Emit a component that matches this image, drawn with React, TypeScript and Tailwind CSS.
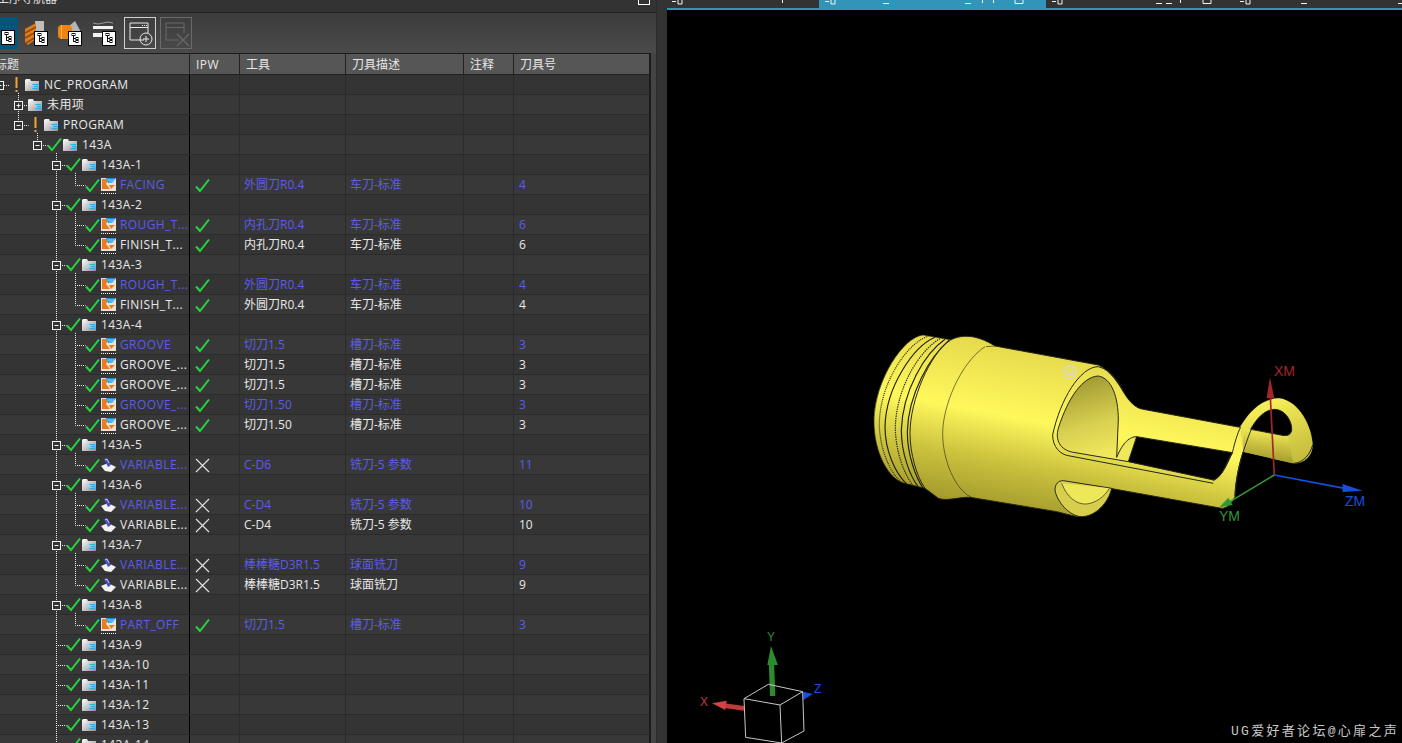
import React from 'react';

interface Row {
    level: number;
    name: string;
    status?: 'ok' | 'warn';
    box?: 'minus' | 'plus';
    icon?: 'turn' | 'mill';
    blue?: boolean;
    ipw?: 'ok' | 'x';
    tool?: string;
    desc?: string;
    no?: string;
}

const op = (name: string, icon: 'turn' | 'mill', blue: boolean, tool: string, desc: string, no: string): Row => ({
    level: 4, name, status: 'ok', icon, blue, ipw: icon === 'turn' ? 'ok' : 'x', tool, desc, no,
});
const group = (name: string): Row => ({ level: 3, name, status: 'ok', box: 'minus' });
const empty = (name: string): Row => ({ level: 3, name, status: 'ok' });

const rows: Row[] = [
    { level: 0, name: 'NC_PROGRAM', status: 'warn', box: 'minus' },
    { level: 1, name: '未用项', box: 'plus' },
    { level: 1, name: 'PROGRAM', status: 'warn', box: 'minus' },
    { level: 2, name: '143A', status: 'ok', box: 'minus' },
    group('143A-1'),
    op('FACING', 'turn', true, '外圆刀R0.4', '车刀-标准', '4'),
    group('143A-2'),
    op('ROUGH_T...', 'turn', true, '内孔刀R0.4', '车刀-标准', '6'),
    op('FINISH_T...', 'turn', false, '内孔刀R0.4', '车刀-标准', '6'),
    group('143A-3'),
    op('ROUGH_T...', 'turn', true, '外圆刀R0.4', '车刀-标准', '4'),
    op('FINISH_T...', 'turn', false, '外圆刀R0.4', '车刀-标准', '4'),
    group('143A-4'),
    op('GROOVE', 'turn', true, '切刀1.5', '槽刀-标准', '3'),
    op('GROOVE_...', 'turn', false, '切刀1.5', '槽刀-标准', '3'),
    op('GROOVE_...', 'turn', false, '切刀1.5', '槽刀-标准', '3'),
    op('GROOVE_...', 'turn', true, '切刀1.50', '槽刀-标准', '3'),
    op('GROOVE_...', 'turn', false, '切刀1.50', '槽刀-标准', '3'),
    group('143A-5'),
    op('VARIABLE...', 'mill', true, 'C-D6', '铣刀-5 参数', '11'),
    group('143A-6'),
    op('VARIABLE...', 'mill', true, 'C-D4', '铣刀-5 参数', '10'),
    op('VARIABLE...', 'mill', false, 'C-D4', '铣刀-5 参数', '10'),
    group('143A-7'),
    op('VARIABLE...', 'mill', true, '棒棒糖D3R1.5', '球面铣刀', '9'),
    op('VARIABLE...', 'mill', false, '棒棒糖D3R1.5', '球面铣刀', '9'),
    group('143A-8'),
    op('PART_OFF', 'turn', true, '切刀1.5', '槽刀-标准', '3'),
    empty('143A-9'),
    empty('143A-10'),
    empty('143A-11'),
    empty('143A-12'),
    empty('143A-13'),
    empty('143A-14'),
];

const center = (level: number) => 19 * level - 0.5;

const Check = () => (
    <svg width="15" height="15" viewBox="0 0 15 15" fill="none">
        <path d="M1 8.5 L5 13 L14 1.5" stroke="#27d63f" strokeWidth="2" />
    </svg>
);

const Cross = () => (
    <svg width="15" height="15" viewBox="0 0 15 15" fill="none">
        <path d="M1 1 L14 14 M14 1 L1 14" stroke="#e6e6e6" strokeWidth="1.1" />
    </svg>
);

const Bang = () => (
    <svg width="16" height="16" viewBox="0 0 16 16">
        <rect x="6.5" y="0" width="2" height="11" fill="#f5a32e" />
        <rect x="6.5" y="13" width="2" height="2" fill="#f5a32e" />
    </svg>
);

const Folder = () => (
    <svg width="15" height="14" viewBox="0 0 15 14">
        <defs>
            <linearGradient id="fld" x1="0" y1="0" x2="1" y2="1">
                <stop offset="0" stopColor="#ffffff" />
                <stop offset="1" stopColor="#8f8f8f" />
            </linearGradient>
        </defs>
        <path d="M0 2 L1 1 L5 1 L6 3 L14 3 L14 13 L0 13 Z" fill="url(#fld)" />
        <path d="M7.5 6.5 H13 M9 8.5 H13 M7.5 10.5 H13" stroke="#1fb4e6" strokeWidth="1" fill="none" />
    </svg>
);

const TurnIcon = () => (
    <svg width="16" height="17" viewBox="0 0 16 17">
        <rect x="0" y="1" width="15" height="13" fill="#ebe3d6" />
        <path d="M1 2 H8 L5 7 L9 12 H1 Z" fill="#ee7a1e" />
        <path d="M5 1 H15 L11 6 H7 Z" fill="#1f8fdc" />
        <path d="M8 8 H14 L10 12 Z" fill="#ee7a1e" />
        <path d="M6 3 H13 M8 5 H12" stroke="#7fe0ff" strokeWidth="1" />
        <path d="M0 16.5 H16" stroke="#ffffff" strokeDasharray="1 1" />
    </svg>
);

const MillIcon = () => (
    <svg width="16" height="15" viewBox="0 0 16 15">
        <path d="M0 8 L7 5 L15 9 L10 14 L4 13 Z" fill="#f2f2f2" />
        <path d="M3 1 L6 0 L10 7 L7 9 Z" fill="#4a4fc0" />
        <path d="M4 2 L6 1 L8 5" stroke="#c8ccff" fill="none" />
    </svg>
);

// expand lines and boxes lie over the rows of the first column
const TreeLines = () => (
    <svg className="absolute left-0 top-0 pointer-events-none" width="189" height={rows.length * 20} fill="none">
        {rows.map((r, i) => {
            if (r.level === 0) return null;
            let p = i - 1;
            while (rows[p].level >= r.level) p--;
            const x = Math.floor(center(r.level)) + 0.5;
            const y = i * 20 + 10.5;
            return (
                <path
                    key={i}
                    d={`M${x} ${p * 20 + 18} V${y} H${x + 10}`}
                    stroke="#f0f0f0"
                    strokeDasharray="1 1"
                />
            );
        })}
        <path d="M0 10.5 H10" stroke="#f0f0f0" strokeDasharray="1 1" />
        {rows.map((r, i) => {
            if (!r.box) return null;
            const x = Math.floor(center(r.level)) + 0.5;
            const y = i * 20 + 10.5;
            return (
                <g key={i} stroke="#f4f4f4">
                    <rect x={x - 4} y={y - 4} width="8" height="8" fill="#333333" />
                    <path d={r.box === 'plus' ? `M${x - 2} ${y} H${x + 2} M${x} ${y - 2} V${y + 2}` : `M${x - 2} ${y} H${x + 2}`} />
                </g>
            );
        })}
    </svg>
);

const Badge = () => (
    <span className="relative flex w-[14px] h-[15px] items-center justify-center bg-white border border-black">
        <svg width="10" height="11" viewBox="0 0 10 11" fill="none" stroke="#111">
            <rect x="2" y="0.5" width="3" height="2" />
            <path d="M3.5 3 V9 M3.5 5.5 H6 M3.5 8.5 H6" />
            <rect x="6" y="4.5" width="2" height="2" />
            <rect x="6" y="7.5" width="2" height="2" />
        </svg>
    </span>
);

const Toolbar = () => (
    <div className="h-[41px] flex-none flex items-center bg-gradient-to-b from-[#3c3c3c] to-[#4a4a4a] border-t border-[#222]">
        <div className="w-[18px] h-8 bg-[#075578] flex items-end justify-end pr-[3px] pb-1">
            <Badge />
        </div>
        <div className="w-[34px] h-8 relative flex items-end justify-end pr-1 pb-[3px]">
            <svg className="absolute left-[6px] top-[3px]" width="24" height="26" viewBox="0 0 24 26">
                <rect x="11" y="1" width="9" height="11" fill="#bdbdbd" />
                <path d="M1 9 L12 3 V19 L4 25 L1 22 Z" fill="#e07a1c" />
                <path d="M1 13 L12 7 M1 18 L12 12 M2 23 L12 17" stroke="#8d4a10" strokeWidth="1.5" />
            </svg>
            <Badge />
        </div>
        <div className="w-[34px] h-8 relative flex items-end justify-end pr-1 pb-[3px]">
            <svg className="absolute left-[6px] top-[3px]" width="24" height="26" viewBox="0 0 24 26">
                <path d="M11 6 L17 1 L24 14 L18 20 Z" fill="#b5b5b5" />
                <rect x="0" y="5" width="14" height="14" rx="4" fill="#ee8413" />
                <path d="M3.5 5 V19" stroke="#ffb14a" />
            </svg>
            <Badge />
        </div>
        <div className="w-[34px] h-8 relative flex items-end justify-end pr-1 pb-[3px]">
            <svg className="absolute left-[7px] top-[3px]" width="22" height="20" viewBox="0 0 22 20">
                <path d="M0 6 H20 V9 H0 Z M0 13 H10 V17 H0 Z" fill="#f2f2f2" />
                <path d="M0 3 Q5 5 10 3 T20 3" stroke="#999" fill="none" />
            </svg>
            <Badge />
        </div>
        <button className="w-8 h-8 ml-1 border border-[#cfcfcf] flex items-center justify-center">
            <svg width="28" height="28" viewBox="0 0 28 28" fill="none" stroke="#e8e8e8">
                <path d="M18 21 H4 V4 H22 V14" />
                <path d="M4 8.5 H22" />
                <path d="M16 6.5 H17 M18 6.5 H19 M20 6.5 H21" />
                <circle cx="20" cy="20" r="6" />
                <path d="M17 20 H23 M20 17 V23" />
            </svg>
        </button>
        <button className="w-8 h-8 ml-1 border border-[#6a6a6a] flex items-center justify-center">
            <svg width="28" height="28" viewBox="0 0 28 28" fill="none" stroke="#686868">
                <path d="M17 21 H4 V4 H22 V14" />
                <path d="M4 8.5 H22" />
                <path d="M15 15 L27 27 M27 15 L15 27" strokeWidth="1.3" />
            </svg>
        </button>
    </div>
);

const head = ['IPW', '工具', '刀具描述', '注释', '刀具号'];
const cols = 'grid grid-cols-[190px_50px_106px_118px_50px_1fr]';

const Table = () => (
    <div className="flex-1 min-h-0 mr-[5px] border-t border-r-2 border-[#1c1c1c] bg-[#333] overflow-hidden">
        <div className={`${cols} h-[21px] border-b border-[#222] bg-[#565656] text-[#e6e6e6]`}>
            <div className="border-r border-[#222] leading-[22px] -ml-[5px]">标题</div>
            {head.map((h, i) => (
                <div key={h} className={`pl-[6px] leading-[22px] ${i === 0 ? 'tracking-[0.5px]' : ''} ${i < 4 ? 'border-r border-[#222]' : ''}`}>{h}</div>
            ))}
        </div>
        <div className="relative">
            {rows.map((r, i) => (
                <div key={i} className={`${cols} h-5 border-b border-[#2b2b2b] ${i % 2 ? 'bg-[#383838]' : 'bg-[#343434]'}`}>
                    <div className="flex items-center border-r border-black overflow-hidden">
                        <div className="flex items-center flex-none" style={{ marginLeft: center(r.level) + 9.5 }}>
                            {r.status === 'ok' && <span className="w-4 flex-none"><Check /></span>}
                            {r.status === 'warn' && <span className="w-4 flex-none"><Bang /></span>}
                            <span className="w-[19px] flex-none flex items-center">
                                {r.icon === 'turn' ? <TurnIcon /> : r.icon === 'mill' ? <MillIcon /> : <Folder />}
                            </span>
                            <span className={`whitespace-nowrap tracking-[0.4px] ${r.blue ? 'text-[#5c5ce8]' : 'text-[#e8e8e8]'}`}>{r.name}</span>
                        </div>
                    </div>
                    <div className="border-r border-[#2b2b2b] flex items-center pl-[5px]">
                        {r.ipw === 'ok' && <Check />}
                        {r.ipw === 'x' && <Cross />}
                    </div>
                    <div className={`border-r border-[#2b2b2b] pl-[4px] leading-5 whitespace-nowrap ${r.blue ? 'text-[#5c5ce8]' : 'text-[#e8e8e8]'}`}>{r.tool}</div>
                    <div className={`border-r border-[#2b2b2b] pl-[4px] leading-5 whitespace-nowrap ${r.blue ? 'text-[#5c5ce8]' : 'text-[#e8e8e8]'}`}>{r.desc}</div>
                    <div className="border-r border-[#2b2b2b]" />
                    <div className={`pl-[5px] leading-5 ${r.blue ? 'text-[#5c5ce8]' : 'text-[#e8e8e8]'}`}>{r.no}</div>
                </div>
            ))}
            <TreeLines />
        </div>
    </div>
);

const Tabs = () => (
    <div className="h-[10px] flex-none relative overflow-hidden">
        <div className="h-2 flex">
            <div className="w-[152px] bg-[#333]" />
            <div className="w-[227px] bg-[#3194b8]" />
            <div className="flex-1 bg-[#333]" />
        </div>
        <div className="h-[2px] bg-[#3194b8]" />
        <svg className="absolute left-0 top-0" width="735" height="8" fill="none" stroke="#f4f4f4">
            <path d="M5 1.5 H9 M11 0 V4 H15 V0 M115.5 0 V3" />
            <path d="M158 1.5 H162 M164 0 V4 H168 V0 M216 3.5 H222 M298 3.5 H304 M315.5 0 V3 M326.5 0 V3 M348 0 V3.5 H356 V0" />
            <path d="M385 1.5 H389 M391 0 V4 H395 V0 M489 3.5 H495 M499 3.5 H505 M513.5 0 V3 M536 0 V3.5 H544 V0" />
            <path d="M573 1.5 H577 M579 0 V4 H583 V0 M634 3.5 H640 M731 3.5 H735" />
        </svg>
    </div>
);

const Part = () => (
    <g transform="translate(860 320) scale(0.3333)">
        <defs>
            <linearGradient id="body" gradientUnits="userSpaceOnUse" x1="420" y1="70" x2="330" y2="560">
                <stop offset="0" stopColor="#e6da4c" />
                <stop offset="0.42" stopColor="#fff85c" />
                <stop offset="0.7" stopColor="#cbc23e" />
                <stop offset="1" stopColor="#a0982c" />
            </linearGradient>
            <linearGradient id="bore" gradientUnits="userSpaceOnUse" x1="650" y1="170" x2="720" y2="410">
                <stop offset="0" stopColor="#9d9630" />
                <stop offset="0.6" stopColor="#d8d050" />
                <stop offset="1" stopColor="#f0e85c" />
            </linearGradient>
            <linearGradient id="arm" gradientUnits="userSpaceOnUse" x1="1200" y1="330" x2="1190" y2="420">
                <stop offset="0" stopColor="#f0e856" />
                <stop offset="0.5" stopColor="#c8bf40" />
                <stop offset="1" stopColor="#a39b2e" />
            </linearGradient>
            <linearGradient id="ring" gradientUnits="userSpaceOnUse" x1="1250" y1="235" x2="1330" y2="430">
                <stop offset="0" stopColor="#f6ee58" />
                <stop offset="1" stopColor="#c0b83a" />
            </linearGradient>
        </defs>
        {/* threaded end */}
        <path d="M190 45 C130 50 45 180 42 300 C40 400 90 482 135 490 L195 505 L275 60 Z" fill="url(#body)" stroke="#26261a" strokeWidth="2" />
        <g fill="none" stroke="#23230f" strokeWidth="3.5">
            <path d="M205 48 C140 70 60 190 58 310 C58 390 95 470 130 490" strokeDasharray="3 3" />
            <path d="M225 52 C160 80 78 200 75 320 C75 390 105 460 140 492" />
            <path d="M240 56 C180 90 110 200 106 320 C106 390 130 460 160 498" strokeDasharray="4 3" />
            <path d="M255 58 C195 100 128 210 124 330 C124 400 150 470 176 502" />
            <path d="M268 60 C210 110 145 220 142 335 C142 400 165 470 190 505" />
        </g>
        {/* main body with arms and ring */}
        <path
            d="M272 60 C300 45 345 40 405 78 L715 135 C750 150 775 190 790 215 C810 250 830 265 850 268 L1140 322 C1170 270 1210 235 1258 235 C1320 245 1355 320 1358 375 C1358 405 1335 432 1300 430 L1150 395 C1135 440 1125 500 1125 530 C1115 552 1100 565 1085 565 L750 505 C740 550 690 590 650 590 L590 575 L330 532 C300 530 260 545 235 535 L195 505 C170 470 150 400 150 340 C150 240 210 100 272 60 Z"
            fill="url(#body)"
            stroke="#26261a"
            strokeWidth="3"
            strokeLinejoin="round"
        />
        {/* ring rear and upper arm seen through it */}
        <path d="M1140 322 C1170 270 1210 235 1258 235 C1320 245 1355 320 1358 375 C1358 405 1335 432 1300 430 L1150 395 Z" fill="url(#ring)" />
        <path d="M1150 325 L1285 348 L1300 430 L1150 395 Z" fill="url(#arm)" />
        {/* openings */}
        <path d="M830 350 L1118 398 C1105 420 1090 470 1060 480 L805 425 C790 400 805 360 830 350 Z" fill="#000" stroke="#26261a" strokeWidth="3" />
        <path d="M1172 328 C1190 295 1215 268 1245 268 C1280 270 1298 310 1295 332 C1292 345 1280 350 1262 345 Z" fill="#000" stroke="#26261a" strokeWidth="3" />
        <path d="M1125 528 C1128 470 1140 420 1155 380 C1162 360 1168 340 1176 325" fill="none" stroke="#26261a" strokeWidth="3" />
        <path d="M1060 482 C1090 470 1100 420 1118 395 C1124 370 1132 340 1142 322" fill="none" stroke="#26261a" strokeWidth="3" />
        <path d="M1300 430 C1330 430 1352 400 1358 375" fill="none" stroke="#26261a" strokeWidth="3" />
        {/* front bore */}
        <path d="M578 345 C600 240 660 140 715 140 C755 150 780 190 790 215" fill="none" stroke="#26261a" strokeWidth="3" />
        <path d="M595 325 C625 230 670 170 715 168 C755 175 775 230 775 300 L770 412 C790 365 810 350 830 350 L805 425 L640 397 C600 390 585 360 595 325 Z" fill="url(#bore)" stroke="#26261a" strokeWidth="3" />
        <path d="M578 345 C578 380 600 405 630 408 L1060 490" fill="none" stroke="#26261a" strokeWidth="3" />
        {/* lower notch */}
        <path d="M585 510 C590 545 630 590 665 590 C705 590 745 550 755 505 L610 482 C595 482 585 492 585 510 Z" fill="#d6ce4c" stroke="#26261a" strokeWidth="3" />
        <path d="M605 490 C620 530 650 555 680 552 C705 550 735 530 748 505" fill="#efe75a" stroke="#26261a" strokeWidth="2" />
        {/* body seams */}
        <g fill="none" stroke="#33331c" strokeWidth="2">
            <path d="M375 80 C300 130 248 260 248 340 C248 420 285 510 335 532" />
            <path d="M405 78 L378 80" />
        </g>
        {/* datum mark */}
        <g fill="none" stroke="#d8d8d8" strokeWidth="3.5">
            <circle cx="630" cy="156" r="19" />
            <circle cx="630" cy="156" r="9" />
        </g>
        {/* machine csys */}
        <path d="M1243 465 L1230 210" stroke="#a3262a" strokeWidth="5" />
        <path d="M1230 172 L1243 235 L1220 235 Z" fill="#a3262a" />
        <path d="M1243 465 L1470 508" stroke="#1450e0" strokeWidth="5" />
        <path d="M1508 512 L1448 492 L1448 516 Z" fill="#1450e0" />
        <path d="M1243 465 L1110 545" stroke="#2f9a35" strokeWidth="5" />
        <path d="M1078 562 L1105 533 L1118 555 Z" fill="#2f9a35" />
    </g>
);

const Triad = () => (
    <g transform="translate(680 620) scale(0.3333)">
        <path d="M278 228 L274 120" stroke="#2c8a30" strokeWidth="16" />
        <path d="M273 78 L294 135 L262 135 Z" fill="#2c8a30" />
        <path d="M192 265 L120 255" stroke="#c03a3a" strokeWidth="14" />
        <path d="M96 250 L140 242 L136 270 Z" fill="#d04444" />
        <path d="M370 240 V215 L398 222 Z" fill="#1450e8" />
        <g fill="none" stroke="#c8c8c8" strokeWidth="3">
            <path d="M192 236 L265 193 L368 215 L300 255 Z" />
            <path d="M192 236 L197 352 L305 369 L300 255" />
            <path d="M305 369 L372 333 L368 215" />
        </g>
    </g>
);

const Viewport = () => (
    <div className="flex-1 relative bg-black overflow-hidden">
        <svg className="absolute left-0 top-0" width="735" height="733" viewBox="667 10 735 733">
            <Part />
            <Triad />
            <g fontFamily="'Liberation Sans', sans-serif" fontSize="14">
                <text x="1274" y="376" fill="#a3262a">XM</text>
                <text x="1345" y="506" fill="#1450e0">ZM</text>
                <text x="1219" y="521" fill="#2f9a35">YM</text>
                <text x="767" y="641" fontSize="12" fill="#2c8a30">Y</text>
                <text x="700" y="706" fontSize="12" fill="#c03a3a">X</text>
                <text x="814" y="693" fontSize="12" fill="#1450e8">Z</text>
            </g>
        </svg>
        <div className="absolute right-[3px] bottom-[3px] text-[13px] leading-4 tracking-[2.3px] text-[#c8c8c8] font-['Liberation_Mono','Noto_Sans_CJK_SC',monospace]">
            UG爱好者论坛@心扉之声
        </div>
    </div>
);

export default function App() {
    return (
        <div className="w-[1402px] h-[743px] flex overflow-hidden bg-[#333] text-[12px] font-['Open_Sans','Noto_Sans_CJK_SC',sans-serif]">
            <div className="w-[657px] flex-none flex flex-col bg-[#444] border-r border-[#2a2a2a]">
                <div className="h-3 flex-none bg-[#333] overflow-hidden relative">
                    <span className="absolute -left-[3px] -top-[9px] text-[#e0e0e0] leading-4">工序导航器</span>
                    <span className="absolute right-[6px] -top-[6px] w-3 h-[11px] border border-white" />
                </div>
                <Toolbar />
                <Table />
            </div>
            <div className="w-[10px] flex-none bg-[#333]" />
            <div className="flex-1 flex flex-col">
                <Tabs />
                <Viewport />
            </div>
        </div>
    );
}
